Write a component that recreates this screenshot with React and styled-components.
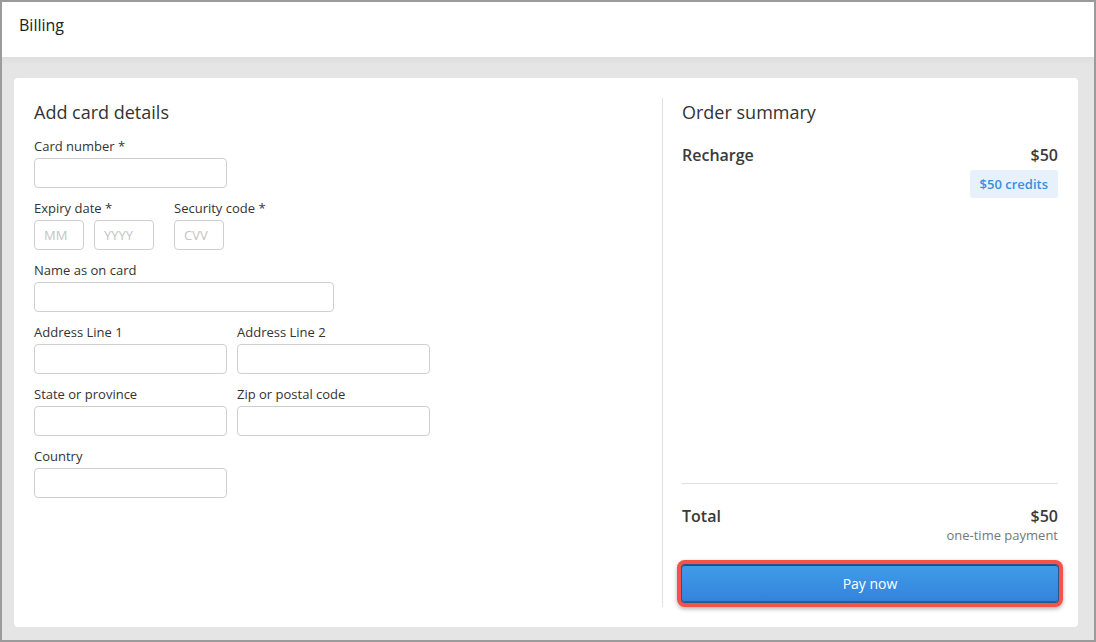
import React from "react";
import styled, { createGlobalStyle } from "styled-components";

const Global = createGlobalStyle`
  html, body { margin: 0; padding: 0; }
  body { font-family: "Open Sans", "Noto Sans", sans-serif; color: #333; }
  * { box-sizing: border-box; }
`;

const Frame = styled.div`
  width: 1096px;
  height: 642px;
  border: 2px solid #9b9b9b;
  display: flex;
  flex-direction: column;
  background: #e5e5e5;
`;

const Header = styled.header`
  height: 55px;
  flex: none;
  background: #fff;
  padding: 11px 17px;
  font-size: 16px;
  line-height: 24px;
  color: #222;
`;

const Body = styled.main`
  flex: 1;
  min-height: 0;
  padding: 21px 16px 13px 12px;
  background: linear-gradient(#dedede, #e5e5e5 8px);
  display: flex;
`;

const Card = styled.section`
  flex: 1;
  background: #fff;
  border-radius: 4px;
  padding: 20px;
  display: flex;
`;

const LeftCol = styled.div`
  flex: 1;
  display: flex;
  flex-direction: column;
  gap: 11px;
`;

const RightCol = styled.aside`
  width: 396px;
  flex: none;
  border-left: 1px solid #e0e0e0;
  padding-left: 19px;
  display: flex;
  flex-direction: column;
`;

const Title = styled.h2`
  margin: 0;
  font-size: 18px;
  font-weight: 400;
  line-height: 28px;
  color: #333;
`;

const Row = styled.div`
  display: flex;
  gap: ${(p) => p.$gap || 10}px;
`;

const Field = styled.div`
  display: flex;
  flex-direction: column;
  gap: 3px;
`;

const Label = styled.label`
  font-size: 13px;
  line-height: 18px;
  color: #333;
`;

const Inputs = styled.div`
  display: flex;
  gap: 10px;
`;

const Input = styled.input`
  width: ${(p) => p.$w}px;
  height: 30px;
  border: 1px solid #cfcfcf;
  border-radius: 4px;
  padding: 0 9px;
  font-family: inherit;
  font-size: 13px;
  color: #333;
  outline: none;
  &::placeholder { color: #c4c4c4; }
`;

const LineItem = styled.div`
  display: flex;
  justify-content: space-between;
  font-size: 16px;
  font-weight: 600;
  line-height: 20px;
  color: #3a3a3a;
  margin-top: ${(p) => p.$mt || 0}px;
`;

const BadgeWrap = styled.div`
  display: flex;
  justify-content: flex-end;
  margin-top: 5px;
`;

const Badge = styled.span`
  background: #e7f1fc;
  color: #3a8ee0;
  font-size: 13px;
  font-weight: 600;
  line-height: 28px;
  height: 28px;
  padding: 0 10px;
  border-radius: 3px;
`;

const Spacer = styled.div`
  flex: 1;
`;

const Separator = styled.hr`
  margin: 0;
  border: 0;
  border-top: 1px solid #e0e0e0;
`;

const Note = styled.div`
  text-align: right;
  font-size: 13px;
  line-height: 18px;
  color: #777;
`;

const PayButton = styled.button`
  margin: 21px 0 5px;
  height: 37px;
  width: 100%;
  border: 0;
  border-radius: 3px;
  background: linear-gradient(#3f9de9, #3482db);
  color: #fff;
  font-family: inherit;
  font-size: 14px;
  box-shadow: inset 0 1px 0 #1f4d80, inset 0 -1px 0 #2a5f9e, 0 0 0 1px #24578f,
    0 0 0 5px #f4534a, 0 2px 4px 5px rgba(0, 0, 0, 0.3);
  cursor: pointer;
`;

export default function App() {
  return (
    <>
      <Global />
      <Frame>
        <Header>Billing</Header>
        <Body>
          <Card>
            <LeftCol>
              <Title>Add card details</Title>
              <Field>
                <Label>Card number *</Label>
                <Input $w={193} />
              </Field>
              <Row $gap={20}>
                <Field>
                  <Label>Expiry date *</Label>
                  <Inputs>
                    <Input $w={50} placeholder="MM" />
                    <Input $w={60} placeholder="YYYY" />
                  </Inputs>
                </Field>
                <Field>
                  <Label>Security code *</Label>
                  <Input $w={50} placeholder="CVV" />
                </Field>
              </Row>
              <Field>
                <Label>Name as on card</Label>
                <Input $w={300} />
              </Field>
              <Row>
                <Field>
                  <Label>Address Line 1</Label>
                  <Input $w={193} />
                </Field>
                <Field>
                  <Label>Address Line 2</Label>
                  <Input $w={193} />
                </Field>
              </Row>
              <Row>
                <Field>
                  <Label>State or province</Label>
                  <Input $w={193} />
                </Field>
                <Field>
                  <Label>Zip or postal code</Label>
                  <Input $w={193} />
                </Field>
              </Row>
              <Field>
                <Label>Country</Label>
                <Input $w={193} />
              </Field>
            </LeftCol>
            <RightCol>
              <Title>Order summary</Title>
              <LineItem $mt={19}>
                <span>Recharge</span>
                <span>$50</span>
              </LineItem>
              <BadgeWrap>
                <Badge>$50 credits</Badge>
              </BadgeWrap>
              <Spacer />
              <Separator />
              <LineItem $mt={22}>
                <span>Total</span>
                <span>$50</span>
              </LineItem>
              <Note>one-time payment</Note>
              <PayButton>Pay now</PayButton>
            </RightCol>
          </Card>
        </Body>
      </Frame>
    </>
  );
}
